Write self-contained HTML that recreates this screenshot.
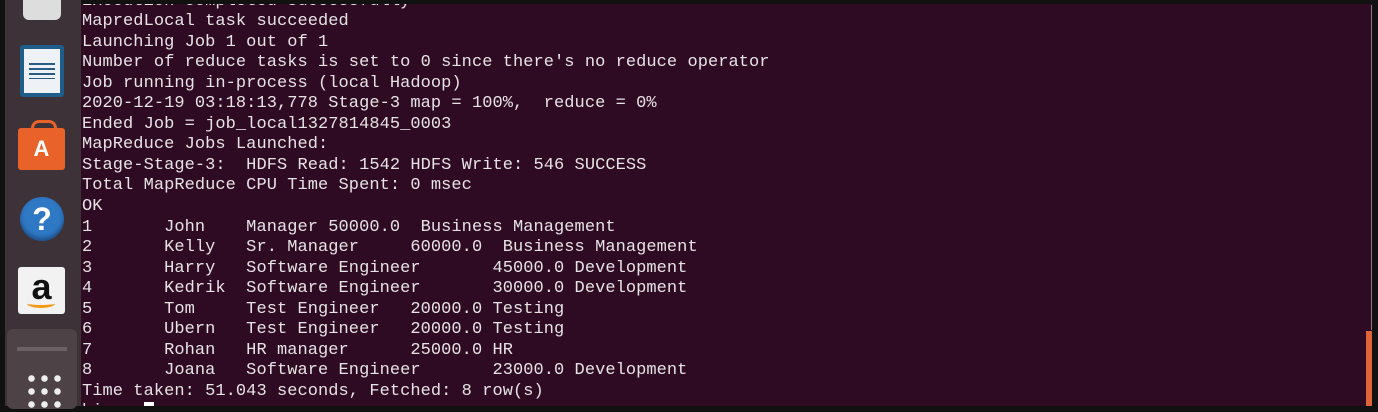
<!DOCTYPE html>
<html><head><style>
body{margin:0;width:1378px;height:412px;background:#111;position:relative;overflow:hidden}
#side{position:absolute;left:5px;top:0;width:76px;height:406px;background:#3c3237}
#term{position:absolute;left:81px;top:4px;width:1291px;height:402px;background:#2f0b23;overflow:hidden}
#txt{position:absolute;left:1px;top:-12.5px;margin:0;font:17px/20.55px "Liberation Mono",monospace;letter-spacing:0.06px;color:#e6e3e5;white-space:pre}
.ic{position:absolute}
</style></head><body>
<div id="side">
 <div class="ic" style="left:18px;top:-12px;width:38px;height:32px;background:#ddd;border-radius:6px"></div>
 <div class="ic" style="left:15px;top:45px;width:44px;height:52px;background:#1f5e8a;border-radius:3px"><div style="position:absolute;left:4px;top:4px;width:36px;height:44px;background:#eef2f6"></div><div style="position:absolute;left:9px;top:18px;width:26px;height:16px;background:repeating-linear-gradient(#2a5d86 0 2px,transparent 2px 5px)"></div></div>
 <div class="ic" style="left:13px;top:128px;width:47px;height:42px;background:#e8622a;border-radius:3px;color:#fff;font:bold 22px 'Liberation Sans',sans-serif;text-align:center;line-height:42px">A</div>
 <div class="ic" style="left:26px;top:120px;width:20px;height:12px;border:3px solid #e8622a;border-bottom:none;border-radius:8px 8px 0 0"></div>
 <div class="ic" style="left:15px;top:197px;width:44px;height:44px;background:#2f78c4;border-radius:50%;color:#fff;font:bold 32px 'Liberation Sans',sans-serif;text-align:center;line-height:44px;box-shadow:inset 0 -3px 4px #1d4f88">?</div>
 <div class="ic" style="left:13px;top:267px;width:47px;height:47px;background:#f2f2f2;border-radius:3px;color:#111;font:bold 36px 'Liberation Sans',sans-serif;text-align:center;line-height:40px">a<div style="position:absolute;left:9px;top:32px;width:28px;height:6px;border-bottom:3px solid #f29a16;border-radius:0 0 50% 50%"></div></div>
 <div class="ic" style="left:2px;top:329px;width:70px;height:80px;background:#4d4347;border-radius:6px"><div style="position:absolute;left:10px;top:18px;width:50px;height:4px;background:#6b6266"></div></div>
 <div class="ic" style="left:20px;top:372px;width:40px;height:40px;background:radial-gradient(circle,#eee 3px,transparent 3.5px) 0 0/13px 13px"></div>
</div>
<div id="term"><pre id="txt">Execution completed successfully
MapredLocal task succeeded
Launching Job 1 out of 1
Number of reduce tasks is set to 0 since there's no reduce operator
Job running in-process (local Hadoop)
2020-12-19 03:18:13,778 Stage-3 map = 100%,  reduce = 0%
Ended Job = job_local1327814845_0003
MapReduce Jobs Launched:
Stage-Stage-3:  HDFS Read: 1542 HDFS Write: 546 SUCCESS
Total MapReduce CPU Time Spent: 0 msec
OK
1       John    Manager 50000.0  Business Management
2       Kelly   Sr. Manager     60000.0  Business Management
3       Harry   Software Engineer       45000.0 Development
4       Kedrik  Software Engineer       30000.0 Development
5       Tom     Test Engineer   20000.0 Testing
6       Ubern   Test Engineer   20000.0 Testing
7       Rohan   HR manager      25000.0 HR
8       Joana   Software Engineer       23000.0 Development
Time taken: 51.043 seconds, Fetched: 8 row(s)
hi    <span style="background:#fff">&nbsp;</span></pre>
 <div style="position:absolute;left:1290px;top:1px;width:1px;height:325px;background:#8a7a84"></div>
 <div style="position:absolute;left:1285px;top:327px;width:6px;height:75px;background:#e0643a"></div>
</div>
</body></html>
